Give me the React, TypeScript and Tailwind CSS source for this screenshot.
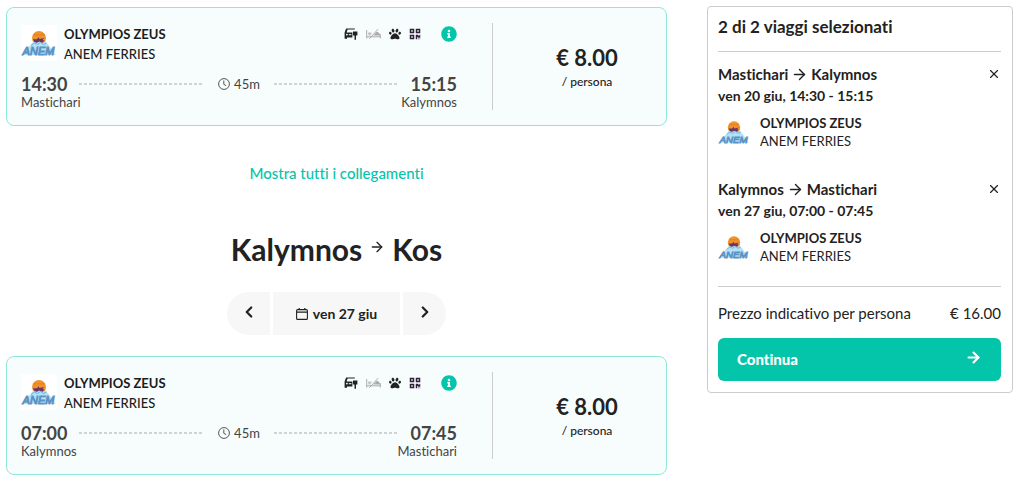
import React from 'react';
import { FaInfoCircle, FaPaw, FaQrcode } from 'react-icons/fa';
import { ArrowRight, ChevronLeft, ChevronRight, X } from 'lucide-react';

interface Trip {
  from: string;
  to: string;
  departure: string;
  arrival: string;
  date: string;
}

const trips: Trip[] = [
  { from: 'Mastichari', to: 'Kalymnos', departure: '14:30', arrival: '15:15', date: 'ven 20 giu' },
  { from: 'Kalymnos', to: 'Mastichari', departure: '07:00', arrival: '07:45', date: 'ven 27 giu' },
];

const AnemLogo: React.FC<{ className: string }> = ({ className }) => (
  <svg viewBox="0 0 36 36" className={className} role="img" aria-label="ANEM">
    <circle cx="18" cy="13" r="7" fill="#f0922b" />
    <path d="M12.5 9.8h11" stroke="#e57a1f" strokeWidth="0.8" />
    <path d="M12 14.2h4l1.5-2 1 1.8 4.5-1-1.5 2.2h2l-2 2.5h-8z" fill="#6b3566" />
    <path d="M1.5 30l8-10 3-3.5 3 1.5 3-1.5 3 1.5 3-1.5 3 3.5 7 10z" fill="#b4e1f6" />
    <path d="M10 20.5l3.5-2.5 3 1.5 3-2 3 2 3-1.5" stroke="#67b4e0" strokeWidth="1" fill="none" />
    <text
      x="17.5"
      y="30"
      textAnchor="middle"
      fontFamily="Liberation Sans, sans-serif"
      fontSize="11"
      fontStyle="italic"
      fill="none"
      stroke="#5b93c4"
      strokeWidth="1"
    >
      ANEM
    </text>
  </svg>
);

const CarKeyIcon: React.FC = () => (
  <svg viewBox="0 0 14 12" className="h-3 w-[14px]" fill="#222">
    <path d="M2.4 0.4h8.4V1.6H3.6L2.6 4.4H8.4V9.6H3v1.2H0.6V4.6L1.9 1z" />
    <circle cx="2.9" cy="6.6" r="0.9" fill="#f7fdfd" />
    <path d="M4.8 6.2h2.6v1H4.8z" fill="#f7fdfd" />
    <path d="M9 3.4h4.4v4h-1.4v4.3h-1.5V7.4H9z" />
  </svg>
);

const NoBedIcon: React.FC = () => (
  <svg viewBox="0 0 15 12" className="h-3 w-[15px]" fill="none" stroke="#aaa">
    <path d="M0.7 2v8.5M0.7 8.8h13.6M14.3 10.5V6.4" />
    <path d="M10.5 4h1.4l2.4 2.4v1.2H7.4z" fill="#aaa" stroke="none" />
    <path d="M2 5.2h3.6M2.4 6.8h2.4" />
    <path d="M3.4 10.8L12 1.2" />
  </svg>
);

const ClockIcon: React.FC = () => (
  <svg viewBox="0 0 12 12" className="h-3 w-3" fill="none" stroke="#444">
    <circle cx="6" cy="6" r="5.4" strokeWidth="0.9" />
    <path d="M5.8 2.5v3.8l2.4 1.4" strokeWidth="0.9" />
  </svg>
);

const CalendarIcon: React.FC = () => (
  <svg viewBox="0 0 12 12" className="h-3 w-3" fill="none" stroke="#222">
    <rect x="0.6" y="1.6" width="10.8" height="9.8" rx="1" strokeWidth="1.1" />
    <path d="M0.6 4.2h10.8M3.2 0v2M8.8 0v2" strokeWidth="1.2" />
  </svg>
);

const Dashes: React.FC = () => (
  <span className="h-[2px] flex-1 bg-[repeating-linear-gradient(90deg,#d0d3d3_0_3px,transparent_3px_5px)]"></span>
);

const TripCard: React.FC<{ trip: Trip }> = ({ trip }) => (
  <article className="flex rounded-lg border border-[#8ee8d8] bg-[#f7fdfd] py-[15px] pl-[14px] pr-[15px]">
    <div className="flex-1 pr-[35px]">
      <div className="flex h-[41px] items-end gap-[7px]">
        <div className="mb-[3px] h-9 w-9 bg-white">
          <AnemLogo className="h-9 w-9" />
        </div>
        <div className="flex-1 text-[13px] leading-5 text-[#1c1c1c]">
          <p className="font-bold">OLYMPIOS ZEUS</p>
          <p className="font-medium">ANEM FERRIES</p>
        </div>
        <div className="flex items-center gap-2 self-start pt-[3px]">
          <CarKeyIcon />
          <NoBedIcon />
          <FaPaw className="h-3 w-3 text-[#222]" />
          <FaQrcode className="h-3 w-3 text-[#30203c]" />
          <button aria-label="Informazioni" className="ml-3">
            <FaInfoCircle className="h-4 w-4 text-[#04c4aa]" />
          </button>
        </div>
      </div>
      <div className="mt-[10px] flex items-center text-[#444]">
        <span className="text-lg font-bold leading-5">{trip.departure}</span>
        <span className="flex flex-1 items-center gap-[14px] px-3 text-[13px] leading-5">
          <Dashes />
          <span className="flex items-center gap-1">
            <ClockIcon />
            45m
          </span>
          <Dashes />
        </span>
        <span className="text-lg font-bold leading-5">{trip.arrival}</span>
      </div>
      <div className="flex justify-between text-[13px] leading-4 text-[#444]">
        <span>{trip.from}</span>
        <span>{trip.to}</span>
      </div>
    </div>
    <div className="flex w-[159px] flex-col items-center border-l border-[#ccc] pl-[30px] pt-[21px] text-[#222]">
      <p className="text-[22px] font-bold leading-7">€ 8.00</p>
      <p className="text-xs font-medium leading-5">/ persona</p>
    </div>
  </article>
);

const SelectedTrip: React.FC<{ trip: Trip }> = ({ trip }) => (
  <li className="h-[115px] pt-[11px]">
    <div className="flex items-center justify-between">
      <h3 className="flex items-center gap-[3px] text-[15px] font-bold leading-[22px]">
        {trip.from}
        <ArrowRight size={17} strokeWidth={2} />
        {trip.to}
      </h3>
      <button aria-label="Rimuovi">
        <X size={14} strokeWidth={2} />
      </button>
    </div>
    <p className="text-sm font-bold leading-[22px]">
      {trip.date}, {trip.departure} - {trip.arrival}
    </p>
    <div className="mt-[7px] flex items-center gap-[10px]">
      <AnemLogo className="h-8 w-8" />
      <div className="text-[13px] leading-[18px]">
        <p className="font-bold">OLYMPIOS ZEUS</p>
        <p>ANEM FERRIES</p>
      </div>
    </div>
  </li>
);

const App: React.FC = () => {
  return (
    <div className="flex items-start gap-10 bg-white pl-[6px] pr-1 font-['Lato',sans-serif] text-[#222] [font-variant-ligatures:none]">
      <main className="flex-1 pt-[7px]">
        <TripCard trip={trips[0]} />
        <div className="pt-[35px] text-center">
          <a href="#" className="text-[15px] font-medium leading-6 text-[#04c4aa]">
            Mostra tutti i collegamenti
          </a>
        </div>
        <h2 className="mt-11 flex justify-center gap-[7px] text-[30px] font-bold leading-10">
          Kalymnos
          <ArrowRight size={16} strokeWidth={2} className="mt-[10px]" />
          Kos
        </h2>
        <div className="mt-[23px] flex justify-center gap-[3px]">
          <button aria-label="Giorno precedente" className="flex h-[43px] w-[43px] items-center justify-center rounded-l-full bg-[#f7f7f7] pb-1">
            <ChevronLeft size={18} strokeWidth={3} />
          </button>
          <button className="flex h-[43px] w-[127px] items-center justify-center gap-[5px] bg-[#f7f7f7] text-sm font-bold">
            <CalendarIcon />
            ven 27 giu
          </button>
          <button aria-label="Giorno successivo" className="flex h-[43px] w-[43px] items-center justify-center rounded-r-full bg-[#f7f7f7] pb-1">
            <ChevronRight size={18} strokeWidth={3} />
          </button>
        </div>
        <div className="mt-[21px]">
          <TripCard trip={trips[1]} />
        </div>
      </main>

      <aside className="mt-[6px] w-[306px] rounded border border-[#ccc] pb-[11px] pl-[10px] pr-[11px]">
        <h2 className="border-b border-[#ccc] pb-3 pt-2 text-[17px] font-bold leading-6">
          2 di 2 viaggi selezionati
        </h2>
        <ul className="pb-1">
          {trips.map((trip) => (
            <SelectedTrip key={trip.date} trip={trip} />
          ))}
        </ul>
        <div className="flex justify-between border-t border-[#ccc] pb-[13px] pt-[14px] text-[15px] leading-6">
          <span>Prezzo indicativo per persona</span>
          <span>€ 16.00</span>
        </div>
        <button className="flex h-[43px] w-full items-center justify-between rounded-md bg-[#04c4aa] px-[19px] text-[15px] font-black text-white">
          Continua
          <ArrowRight size={17} strokeWidth={3} className="mb-1" />
        </button>
      </aside>
    </div>
  );
};

export default App;
